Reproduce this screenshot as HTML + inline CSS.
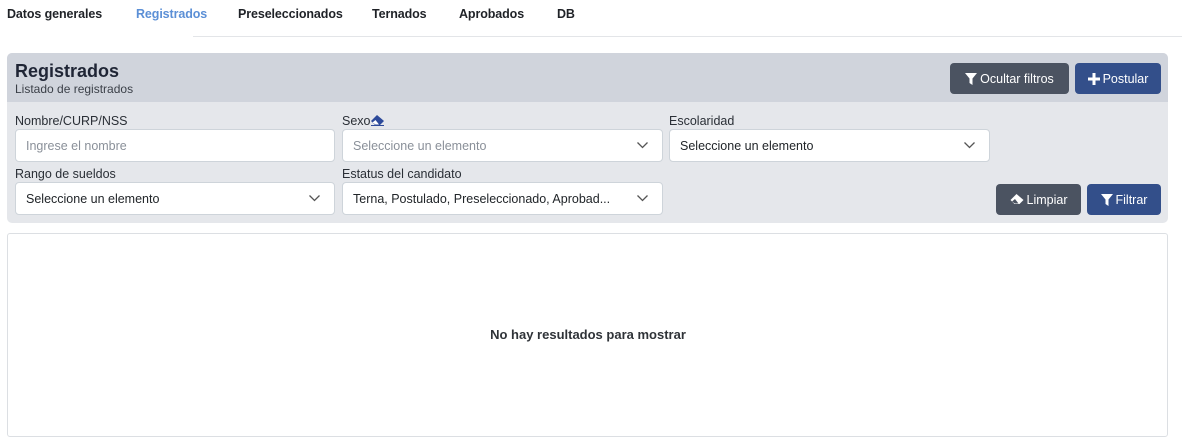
<!DOCTYPE html>
<html><head><meta charset="utf-8"><style>
*{box-sizing:border-box;margin:0;padding:0}
body{width:1182px;height:448px;background:#fff;font-family:"Liberation Sans",sans-serif;color:#212529;position:relative;overflow:hidden}
.a{position:absolute}
.tab{position:absolute;top:7px;font-size:12.5px;font-weight:bold;color:#1f2227;letter-spacing:-0.1px}
.inp{position:absolute;height:33px;background:#fff;border:1px solid #ced4da;border-radius:4px;font-size:12.5px;padding:0 10px;line-height:32px;color:#212529}
.ph{color:#8a9099}
.chev{position:absolute;right:14px;top:12px}
.lbl{position:absolute;font-size:12.5px;color:#2a2f36}
.btn{position:absolute;height:31px;border-radius:4px;color:#fff;font-size:12.5px;display:flex;align-items:center;justify-content:center;gap:3px}
</style></head><body>
<div class="tab" style="left:7px">Datos generales</div>
<div class="tab" style="left:136px;color:#5b8fd6">Registrados</div>
<div class="tab" style="left:238px">Preseleccionados</div>
<div class="tab" style="left:372px">Ternados</div>
<div class="tab" style="left:459px">Aprobados</div>
<div class="tab" style="left:557px">DB</div>
<div class="a" style="left:193px;top:36px;width:989px;height:1px;background:#e3e5e8"></div>

<div class="a" style="left:7px;top:53px;width:1161px;height:170px;background:#e5e7eb;border-radius:5px;overflow:hidden">
 <div class="a" style="left:0;top:0;width:100%;height:49px;background:#d0d4dc"></div>
</div>
<div class="a" style="left:15px;top:61px;font-size:18px;font-weight:bold;color:#1f2535">Registrados</div>
<div class="a" style="left:15px;top:82px;font-size:12px;color:#3a3f47">Listado de registrados</div>

<div class="btn" style="left:950px;top:63px;width:119px;background:#4b5361"><svg width="12" height="12" viewBox="0 0 12 12"><path d="M0 0H12L7.5 5.5V12L4.5 10V5.5Z" fill="#fff"/></svg>Ocultar filtros</div>
<div class="btn" style="left:1075px;top:63px;width:86px;background:#334f8a"><svg width="12" height="12" viewBox="0 0 12 12"><path d="M4.5 0H7.5V4.5H12V7.5H7.5V12H4.5V7.5H0V4.5H4.5Z" fill="#fff"/></svg>Postular</div>

<div class="lbl" style="left:15px;top:114px">Nombre/CURP/NSS</div>
<div class="lbl" style="left:342px;top:114px">Sexo<svg width="13" height="11" viewBox="0 0 13 11" style="vertical-align:-1px"><path d="M6 0L13 6L9 10H4L0 6Z" fill="#2d4a9a"/><path d="M1.5 7.5L4.5 9.5H8L4.5 5Z" fill="#fff"/><rect x="0" y="10" width="13" height="1" fill="#2d4a9a"/></svg></div>
<div class="lbl" style="left:669px;top:114px">Escolaridad</div>
<div class="inp ph" style="left:15px;top:129px;width:320px">Ingrese el nombre</div>
<div class="inp ph" style="left:342px;top:129px;width:321px">Seleccione un elemento<svg class="chev" width="11" height="7" viewBox="0 0 11 7"><path d="M0.5 0.5L5.5 5.5L10.5 0.5" stroke="#555" fill="none" stroke-width="1.3"/></svg></div>
<div class="inp" style="left:669px;top:129px;width:321px">Seleccione un elemento<svg class="chev" width="11" height="7" viewBox="0 0 11 7"><path d="M0.5 0.5L5.5 5.5L10.5 0.5" stroke="#555" fill="none" stroke-width="1.3"/></svg></div>

<div class="lbl" style="left:15px;top:167px">Rango de sueldos</div>
<div class="lbl" style="left:342px;top:167px">Estatus del candidato</div>
<div class="inp" style="left:15px;top:182px;width:320px">Seleccione un elemento<svg class="chev" width="11" height="7" viewBox="0 0 11 7"><path d="M0.5 0.5L5.5 5.5L10.5 0.5" stroke="#555" fill="none" stroke-width="1.3"/></svg></div>
<div class="inp" style="left:342px;top:182px;width:321px">Terna, Postulado, Preseleccionado, Aprobad...<svg class="chev" width="11" height="7" viewBox="0 0 11 7"><path d="M0.5 0.5L5.5 5.5L10.5 0.5" stroke="#555" fill="none" stroke-width="1.3"/></svg></div>

<div class="btn" style="left:996px;top:184px;width:85px;background:#4b5361"><svg width="14" height="11" viewBox="0 0 13 11"><path d="M6 0L13 6L9 10H4L0 6Z" fill="#fff"/><path d="M1.5 7.5L4.5 9.5H8L4.5 5Z" fill="#4b5361"/></svg>Limpiar</div>
<div class="btn" style="left:1087px;top:184px;width:74px;background:#334f8a"><svg width="12" height="12" viewBox="0 0 12 12"><path d="M0 0H12L7.5 5.5V12L4.5 10V5.5Z" fill="#fff"/></svg>Filtrar</div>

<div class="a" style="left:7px;top:233px;width:1161px;height:204px;border:1px solid #dcdfe3;border-radius:3px"></div>
<div class="a" style="left:0;top:327px;width:1176px;text-align:center;font-size:13px;font-weight:bold;color:#2f3338">No hay resultados para mostrar</div>
</body></html>
